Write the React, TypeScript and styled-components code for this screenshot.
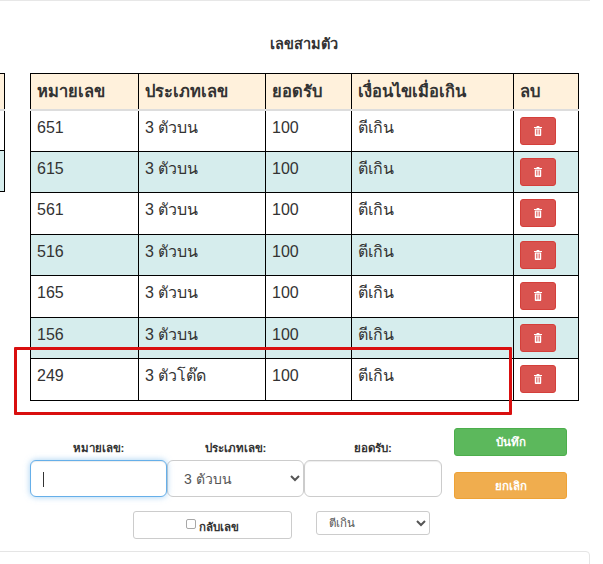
import React from "react";
import styled, { createGlobalStyle } from "styled-components";

const Global = createGlobalStyle`
  html, body { margin: 0; padding: 0; background: #fff; }
  body { font-family: "Liberation Sans", Arial, sans-serif; color: #333; overflow: hidden; }
  * { box-sizing: border-box; }
`;
const Page = styled.div`
  position: relative;
  width: 590px;
  height: 564px;
  border-top: 1px solid #e7e7e7;
  display: flex;
  flex-direction: column;
  overflow: hidden;
`;
const Title = styled.h4`
  margin: 36px 0 0 29px;
  width: 549px;
  height: 36px;
  font-size: 14.5px;
  line-height: 15px;
  font-weight: 700;
  text-align: center;
`;
const TablesRow = styled.div`
  display: flex;
  align-items: flex-start;
  height: 355px;
`;
const SideStub = styled.table`
  border-collapse: collapse;
  width: 6px;
  margin-left: -1px;
  margin-right: 25px;
  table-layout: fixed;
  & th, & td { border: 1px solid #000; padding: 0; }
  & th { background: #fff1dc; height: 36px; border-bottom: 2px solid #ddd; }
  & td { height: 41px; }
  & tr:nth-child(even) td { background: #d6eded; }
`;
const DataTable = styled.table`
  border-collapse: collapse;
  table-layout: fixed;
  width: 548px;
  font-size: 16px;
`;
const Head = styled.th<{ $w: number }>`
  width: ${(p) => p.$w}px;
  height: 36px;
  padding: 0 6px;
  background: #fff1dc;
  border: 1px solid #000;
  border-bottom: 2px solid #ddd;
  text-align: left;
  font-weight: 700;
  font-size: 16.5px;
`;
const Row = styled.tr<{ $alt: boolean; $h: number }>`
  height: ${(p) => p.$h}px;
  background: ${(p) => (p.$alt ? "#d6eded" : "#fff")};
`;
const Cell = styled.td`
  border: 1px solid #000;
  padding: 6px;
  vertical-align: top;
  line-height: 22px;
`;
const DeleteButton = styled.button`
  display: flex;
  align-items: center;
  justify-content: center;
  width: 36px;
  height: 28px;
  padding: 0;
  background: #d9534f;
  border: 1px solid #d43f3a;
  border-radius: 3px;
`;
const FormArea = styled.div`
  display: flex;
  margin-left: 30px;
  width: 537px;
`;
const FieldsColumn = styled.div`
  width: 412px;
  padding-top: 13px;
`;
const FieldsRow = styled.div`
  display: grid;
  grid-template-columns: 137px 137px 138px;
`;
const Field = styled.label`
  display: flex;
  flex-direction: column;
  align-items: center;
  font-size: 11.5px;
  font-weight: 700;
  line-height: 14px;
  gap: 5px;
`;
const InputWrap = styled.span`
  position: relative;
  display: block;
  width: 100%;
`;
const TextInput = styled.input<{ $focus?: boolean }>`
  display: block;
  width: 100%;
  height: 37px;
  padding: 0 12px;
  border-radius: 6px;
  border: 1px solid ${(p) => (p.$focus ? "#66afe9" : "#ccc")};
  box-shadow: ${(p) => (p.$focus ? "0 0 6px rgba(102,175,233,.6), inset 0 1px 1px rgba(0,0,0,.075)" : "inset 0 1px 1px rgba(0,0,0,.075)")};
  outline: none;
  background: #fff;
`;
const Caret = styled.span`
  position: absolute;
  left: 13px;
  top: 12px;
  width: 1px;
  height: 15px;
  background: #333;
`;
const TypeSelect = styled.select`
  width: 100%;
  height: 37px;
  padding: 0 12px;
  font-family: inherit;
  font-size: 14px;
  color: #555;
  background: #fff;
  border: 1px solid #ccc;
  border-radius: 6px;
`;
const OptionsRow = styled.div`
  display: flex;
  align-items: flex-start;
  margin: 14px 0 0 103px;
`;
const ReverseBox = styled.label`
  display: flex;
  align-items: center;
  justify-content: center;
  gap: 3px;
  width: 159px;
  height: 28px;
  padding-top: 3px;
  font-size: 11.5px;
  font-weight: 700;
  border: 1px solid #ccc;
  border-radius: 3px;
`;
const Check = styled.input`
  appearance: none;
  margin: 0 0 5px 0;
  width: 10px;
  height: 10px;
  background: #fff;
  border: 1px solid #a8a8a8;
  border-radius: 2px;
`;
const SmallSelect = styled.select`
  width: 114px;
  height: 24px;
  margin-left: 24px;
  padding: 0 8px;
  font-family: inherit;
  font-size: 11.5px;
  color: #555;
  background: #fff;
  border: 1px solid #ccc;
  border-radius: 3px;
`;
const ButtonsColumn = styled.div`
  display: flex;
  flex-direction: column;
  gap: 16px;
  margin-left: 12px;
  width: 113px;
`;
const ActionButton = styled.button<{ $bg: string; $edge: string; $h: number }>`
  height: ${(p) => p.$h}px;
  padding: 0;
  font-family: inherit;
  font-size: 11.5px;
  font-weight: 700;
  color: #fff;
  background: ${(p) => p.$bg};
  border: 1px solid ${(p) => p.$edge};
  border-radius: 3px;
`;
const BottomCard = styled.div`
  position: absolute;
  left: -4px;
  top: 550px;
  width: 594px;
  height: 40px;
  border: 1px solid #e5e5e5;
  border-radius: 4px;
`;
const Highlight = styled.div`
  position: absolute;
  left: 14px;
  top: 346px;
  width: 498px;
  height: 68px;
  border: 3px solid #d90f0f;
  border-radius: 1px;
  pointer-events: none;
`;

const TrashIcon = () => (
  <svg width="8" height="10" viewBox="0 0 8 10" aria-hidden="true">
    <path
      fill="#fff"
      d="M2.8 0h2.4l.4 1H8v1H0V1h2.4zM.8 2.6h6.4V9.2a.8.8 0 0 1-.8.8H1.6a.8.8 0 0 1-.8-.8zm1.3 1v5h.7v-5zm1.55 0v5h.7v-5zm1.55 0v5h.7v-5z"
    />
  </svg>
);

const rows: [string, string, number][] = [
  ["651", "3 ตัวบน", 41],
  ["615", "3 ตัวบน", 41],
  ["561", "3 ตัวบน", 42],
  ["516", "3 ตัวบน", 41],
  ["165", "3 ตัวบน", 42],
  ["156", "3 ตัวบน", 41],
  ["249", "3 ตัวโต๊ด", 42],
];

const heads: [string, number][] = [
  ["หมายเลข", 108],
  ["ประเภทเลข", 127],
  ["ยอดรับ", 86],
  ["เงื่อนไขเมื่อเกิน", 162],
  ["ลบ", 65],
];

export default function App() {
  return (
    <Page>
      <Global />
      <Title>เลขสามตัว</Title>
      <TablesRow>
        <SideStub>
          <thead><tr><th /></tr></thead>
          <tbody>
            <tr><td /></tr>
            <tr><td /></tr>
          </tbody>
        </SideStub>
        <DataTable>
          <thead>
            <tr>
              {heads.map(([t, w]) => <Head key={t} $w={w}>{t}</Head>)}
            </tr>
          </thead>
          <tbody>
            {rows.map(([n, type, h], i) => (
              <Row key={n} $alt={i % 2 === 1} $h={h}>
                <Cell>{n}</Cell>
                <Cell>{type}</Cell>
                <Cell>100</Cell>
                <Cell>ตีเกิน</Cell>
                <Cell><DeleteButton aria-label="ลบ"><TrashIcon /></DeleteButton></Cell>
              </Row>
            ))}
          </tbody>
        </DataTable>
      </TablesRow>
      <FormArea>
        <FieldsColumn>
          <FieldsRow>
            <Field>หมายเลข:<InputWrap><TextInput $focus /><Caret /></InputWrap></Field>
            <Field>ประเภทเลข:
              <TypeSelect defaultValue="3 ตัวบน">
                <option>3 ตัวบน</option>
                <option>3 ตัวล่าง</option>
                <option>3 ตัวโต๊ด</option>
              </TypeSelect>
            </Field>
            <Field>ยอดรับ:<InputWrap><TextInput /></InputWrap></Field>
          </FieldsRow>
          <OptionsRow>
            <ReverseBox><Check type="checkbox" />กลับเลข</ReverseBox>
            <SmallSelect defaultValue="ตีเกิน">
              <option>ตีเกิน</option>
              <option>ไม่รับ</option>
            </SmallSelect>
          </OptionsRow>
        </FieldsColumn>
        <ButtonsColumn>
          <ActionButton $bg="#5cb85c" $edge="#4cae4c" $h={28}>บันทึก</ActionButton>
          <ActionButton $bg="#f0ad4e" $edge="#eea236" $h={27}>ยกเลิก</ActionButton>
        </ButtonsColumn>
      </FormArea>
      <Highlight />
      <BottomCard />
    </Page>
  );
}
